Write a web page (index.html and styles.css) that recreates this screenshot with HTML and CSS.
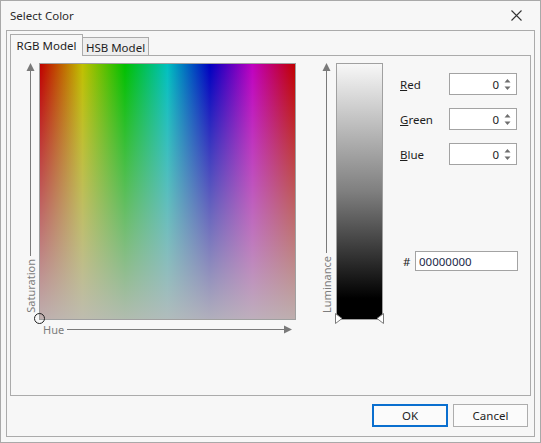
FILE: index.html
```html
<!DOCTYPE html>
<html>
<head>
<meta charset="utf-8">
<title>Select Color</title>
<link rel="stylesheet" href="styles.css">
</head>
<body>
<div class="dialog">
  <div class="titlebar">
    <span class="title">Select Color</span>
    <svg class="close" width="11" height="11" viewBox="0 0 11 11"><path d="M0.5 0.5 L10.5 10.5 M10.5 0.5 L0.5 10.5" stroke="#333" stroke-width="1.1" fill="none"/></svg>
  </div>
  <div class="group">
    <div class="tabs">
      <div class="tab active">RGB Model</div>
      <div class="tab">HSB Model</div>
    </div>
    <div class="page">
      <div class="picker">
        <div class="axis-v">
          <svg class="head-up" width="9" height="8" viewBox="0 0 9 8"><polygon points="4.5,0 8.5,8 0.5,8" fill="#7a7a7a"/></svg>
          <div class="vline"></div>
          <span class="axis-label vertical">Saturation</span>
        </div>
        <div class="square"><div class="marker"></div></div>
        <div class="axis-h">
          <span class="axis-label">Hue</span>
          <div class="hline"></div>
          <svg class="head-right" width="8" height="9" viewBox="0 0 8 9"><polygon points="0,0.5 8,4.5 0,8.5" fill="#7a7a7a"/></svg>
        </div>
      </div>
      <div class="lum">
        <div class="axis-v">
          <svg class="head-up" width="9" height="8" viewBox="0 0 9 8"><polygon points="4.5,0 8.5,8 0.5,8" fill="#7a7a7a"/></svg>
          <div class="vline"></div>
          <span class="axis-label vertical">Luminance</span>
        </div>
        <div class="lumbar">
          <svg class="tri tri-left" width="8" height="11" viewBox="0 0 8 11"><polygon points="0.5,0.5 7,5.5 0.5,10.5" fill="#fff" stroke="#7a7a7a" stroke-width="1"/></svg>
          <svg class="tri tri-right" width="8" height="11" viewBox="0 0 8 11"><polygon points="7.5,0.5 1,5.5 7.5,10.5" fill="#fff" stroke="#7a7a7a" stroke-width="1"/></svg>
        </div>
      </div>
      <div class="fields">
        <div class="field">
          <span class="label"><u>R</u>ed</span>
          <div class="spin"><span class="val">0</span><svg class="spinbtn" width="7" height="13" viewBox="0 0 7 13"><polygon points="0.5,4.5 3.5,1 6.5,4.5" fill="#6e6e6e"/><polygon points="0.5,8.5 3.5,12 6.5,8.5" fill="#6e6e6e"/></svg></div>
        </div>
        <div class="field">
          <span class="label"><u>G</u>reen</span>
          <div class="spin"><span class="val">0</span><svg class="spinbtn" width="7" height="13" viewBox="0 0 7 13"><polygon points="0.5,4.5 3.5,1 6.5,4.5" fill="#6e6e6e"/><polygon points="0.5,8.5 3.5,12 6.5,8.5" fill="#6e6e6e"/></svg></div>
        </div>
        <div class="field">
          <span class="label"><u>B</u>lue</span>
          <div class="spin"><span class="val">0</span><svg class="spinbtn" width="7" height="13" viewBox="0 0 7 13"><polygon points="0.5,4.5 3.5,1 6.5,4.5" fill="#6e6e6e"/><polygon points="0.5,8.5 3.5,12 6.5,8.5" fill="#6e6e6e"/></svg></div>
        </div>
        <div class="hex">
          <span class="hash">#</span>
          <div class="hexbox">00000000</div>
        </div>
      </div>
    </div>
    <div class="buttons">
      <button class="btn btn-default">OK</button>
      <button class="btn">Cancel</button>
    </div>
  </div>
</div>
</body>
</html>
```
FILE: styles.css
```css
* { box-sizing: border-box; }
html, body { margin: 0; padding: 0; }
body {
  font-family: "Noto Sans", "Open Sans", sans-serif;
  font-size: 11.5px;
  color: #1e1e1e;
  background: #f7f7f7;
}
.dialog {
  width: 541px;
  height: 443px;
  border: 1px solid #a9a9a9;
  background: #f7f7f7;
}
.titlebar {
  height: 29px;
  display: flex;
  align-items: center;
  justify-content: space-between;
  padding: 0 18px 0 9px;
}
.title { color: #2b2b2b; font-size: 11.5px; }
.close { display: block; }
.group {
  width: 529px;
  height: 407px;
  margin-left: 5px;
  border: 1px solid #ababab;
  padding: 3px 3px 0 3px;
}
.tabs {
  display: flex;
  align-items: flex-end;
  height: 22px;
  margin-bottom: -1px;
  position: relative;
  z-index: 1;
}
.tab {
  display: flex;
  align-items: center;
  justify-content: center;
  border: 1px solid #ababab;
  color: #1e1e1e;
}
.tab.active {
  width: 73px;
  height: 22px;
  border-bottom: none;
  background: #f7f7f7;
  padding-bottom: 1px;
}
.tab:not(.active) {
  width: 66px;
  height: 19px;
  border-left: none;
  background: #eeeeee;
  padding-top: 1px;
}
.page {
  width: 521px;
  height: 341px;
  border: 1px solid #ababab;
  display: flex;
  align-items: flex-start;
  padding: 7px 0 0 11px;
}
.picker {
  display: grid;
  grid-template-columns: 17px 257px;
  grid-template-rows: 257px 18px;
}
.axis-v {
  display: flex;
  flex-direction: column;
  align-items: center;
  height: 257px;
  width: 17px;
}
.head-up { display: block; flex: none; }
.vline {
  width: 1px;
  flex: 1;
  background: #7a7a7a;
}
.axis-label {
  color: #7d7d7d;
  font-size: 11px;
  line-height: 1;
}
.axis-label.vertical {
  writing-mode: vertical-rl;
  transform: rotate(180deg);
  margin: 3px 0 7px 0;
}
.square {
  position: relative;
  border: 1px solid #a0a0a0;
  background:
    linear-gradient(to bottom, rgba(190,188,188,0) 0%, rgba(190,188,188,0.93) 100%),
    linear-gradient(to right, #c00000 0%, #c0c000 16.67%, #00c000 33.33%, #00c0c0 50%, #0000c0 66.67%, #c000c0 83.33%, #c00000 100%);
}
.marker {
  position: absolute;
  left: -6px;
  top: 249px;
  width: 11px;
  height: 11px;
  border: 1px solid #222;
  border-radius: 50%;
}
.axis-h {
  grid-column: 2;
  display: flex;
  align-items: center;
  padding: 1px 4px 0 4px;
}
.hline {
  flex: 1;
  height: 1px;
  background: #7a7a7a;
  margin-left: 3px;
}
.head-right { display: block; flex: none; }
.lum {
  display: flex;
  margin-left: 22px;
}
.lumbar {
  position: relative;
  width: 47px;
  height: 257px;
  margin-left: 1px;
  border: 1px solid #a0a0a0;
  background: linear-gradient(to bottom, #f7f7f7 0%, #7f7f7f 50%, #000 92%, #000 100%);
}
.tri { position: absolute; top: 249px; display: block; }
.tri-left { left: -2px; }
.tri-right { right: -2px; }
.fields {
  margin-left: 17px;
  margin-top: 10px;
  display: flex;
  flex-direction: column;
  gap: 13px;
}
.field {
  display: flex;
  align-items: center;
}
.label { width: 49px; color: #1e1e1e; }
.spin {
  width: 68px;
  height: 22px;
  border: 1px solid #a3a3a3;
  background: #fff;
  display: flex;
  align-items: center;
  justify-content: flex-end;
  padding-right: 5px;
}
.val { margin-right: 5px; color: #1e1e1e; }
.spinbtn { display: block; }
.hex {
  display: flex;
  align-items: center;
  margin-top: 73px;
}
.hash { width: 15px; padding-left: 3px; color: #1e1e1e; }
.hexbox {
  width: 103px;
  height: 20px;
  border: 1px solid #a3a3a3;
  background: #fff;
  display: flex;
  align-items: center;
  padding-left: 3px;
  color: #1c2a4a;
}
.buttons {
  display: flex;
  justify-content: flex-end;
  gap: 5px;
  margin-top: 8px;
  margin-right: 3px;
}
.btn {
  font-family: "Noto Sans", "Open Sans", sans-serif;
  font-size: 11.5px;
  color: #1e1e1e;
  height: 23px;
  width: 75px;
  background: #fbfbfb;
  border: 1px solid #adadad;
  padding: 0;
  margin: 0;
}
.btn-default {
  width: 76px;
  border: 2px solid #0a6fcf;
}
```
